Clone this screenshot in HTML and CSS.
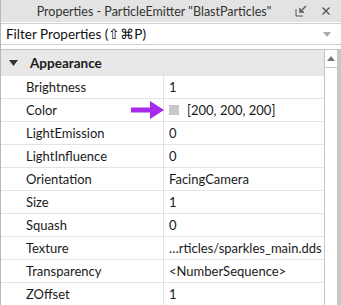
FILE: index.html
```html
<!DOCTYPE html>
<html>
<head>
<meta charset="utf-8">
<link rel="stylesheet" href="styles.css">
</head>
<body>
<div class="panel">
  <div class="titlebar">
    <span class="title">Properties - ParticleEmitter "BlastParticles"</span>
    <span class="tools">
      <svg width="12" height="12" viewBox="0 0 12 12"><path d="M1 4v7h7" fill="none" stroke="#555" stroke-width="1"/><path d="M11 1L5 7M5 3v4h4" fill="none" stroke="#555" stroke-width="1.4"/></svg>
      <svg width="10" height="10" viewBox="0 0 10 10"><path d="M1.5 1.5l7 7M8.5 1.5l-7 7" stroke="#555" stroke-width="1.4"/></svg>
    </span>
  </div>
  <div class="filter">
    <span>Filter Properties (⇧⌘P)</span>
    <svg width="8" height="5" viewBox="0 0 8 5"><path d="M0 0h8L4 5z" fill="#aaa"/></svg>
  </div>
  <div class="tablewrap">
    <div class="table">
      <div class="section"><svg class="caret" width="9" height="6" viewBox="0 0 9 6"><path d="M0 0h9L4.5 6z" fill="#333"/></svg>Appearance</div>
      <div class="row"><div class="name">Brightness</div><div class="val">1</div></div>
      <div class="row"><div class="name">Color<svg class="arrow" width="34" height="20" viewBox="0 0 34 20"><path d="M0 7.5h19V1l14 9-14 9v-6.5H0z" fill="#a629ec"/></svg></div><div class="val"><span class="swatch"></span>[200, 200, 200]</div></div>
      <div class="row"><div class="name">LightEmission</div><div class="val">0</div></div>
      <div class="row"><div class="name">LightInfluence</div><div class="val">0</div></div>
      <div class="row"><div class="name">Orientation</div><div class="val">FacingCamera</div></div>
      <div class="row"><div class="name">Size</div><div class="val">1</div></div>
      <div class="row"><div class="name">Squash</div><div class="val">0</div></div>
      <div class="row"><div class="name">Texture</div><div class="val">…rticles/sparkles_main.dds</div></div>
      <div class="row"><div class="name">Transparency</div><div class="val">&lt;NumberSequence&gt;</div></div>
      <div class="row"><div class="name">ZOffset</div><div class="val">1</div></div>
    </div>
    <div class="scroll">
      <div class="up"><svg width="8" height="5" viewBox="0 0 8 5"><path d="M0 5h8L4 0z" fill="#777"/></svg></div>
    </div>
  </div>
</div>
</body>
</html>
```
FILE: styles.css
```css
html, body { margin: 0; padding: 0; }
body {
  width: 341px; height: 305px; overflow: hidden;
  font-family: Lato, "Open Sans", sans-serif;
  font-size: 13px; color: #1a1a1a; background: #fff;
}
.panel { display: flex; flex-direction: column; height: 305px; border-left: 1px solid #b8b8b8; box-sizing: border-box; }
.titlebar {
  height: 22px; background: #e3e3e3; display: flex; align-items: center; justify-content: center;
  position: relative; color: #333; font-size: 12.5px;
}
.title { margin-left: -34px; }
.tools { position: absolute; right: 10px; top: 5px; display: flex; gap: 14px; align-items: center; }
.filter {
  height: 20px; margin-top: 1px; border-top: 1px solid #d0d0d0; border-bottom: 1px solid #d0d0d0;
  display: flex; align-items: center; justify-content: space-between; padding: 0 10px 0 5px; font-size: 13.5px; color: #111;
}
.tablewrap { display: flex; margin-top: 4px; border-top: 1px solid #c4c4c4; flex: 1; min-height: 0; }
.table { flex: 1; }
.section {
  height: 25px; background: #e8e8e8; display: flex; align-items: center; font-weight: bold; font-size: 13.5px; padding-left: 8px;
}
.caret { margin-right: 12px; }
.row { display: flex; height: 23px; border-top: 1px solid #e4e4e4; box-sizing: border-box; }
.name { width: 137px; padding-left: 25px; border-right: 1px solid #e4e4e4; display: flex; align-items: center; position: relative; }
.val { flex: 1; padding-left: 5px; display: flex; align-items: center; white-space: nowrap; overflow: hidden; }
.swatch { width: 10px; height: 10px; background: #c8c8c8; margin-right: 8px; }
.arrow { position: absolute; left: 130px; top: 1px; }
.scroll { width: 12px; border-left: 1px solid #c4c4c4; border-right: 4px solid #c9c9c9; background: #fff; }
.up { height: 17px; border-bottom: 1px solid #c4c4c4; display: flex; align-items: center; justify-content: center; }
```
